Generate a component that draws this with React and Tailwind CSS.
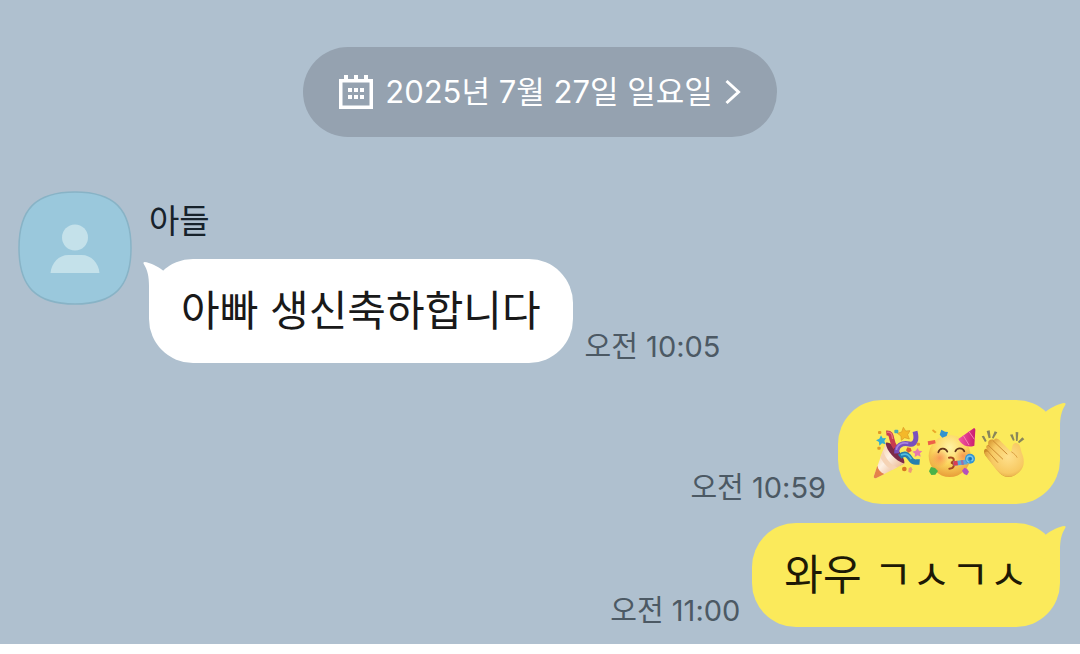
import clsx from 'clsx'

const MESSAGES = [
  { id: 1, time: '오전 10:59', emojis: ['popper', 'party', 'clap'] },
  { id: 2, time: '오전 11:00', text: '와우 ㄱㅅㄱㅅ' },
]

function CalendarIcon() {
  return (
    <svg width="34" height="34" viewBox="0 0 34 34" fill="currentColor" aria-hidden="true">
      <path fillRule="evenodd" d="M0 4h5V0h4v4h6V0h4v4h6V0h4v4h5v30H0zM3.500 7.500v23h27v-23z" />
      {[9, 15, 21].map((x) => (
        <g key={x}>
          <rect x={x} y="13" width="4" height="4" />
          <rect x={x} y="20" width="4" height="4" />
        </g>
      ))}
    </svg>
  )
}

function ChevronIcon() {
  return (
    <svg width="16" height="26" viewBox="0 0 16 26" fill="none" stroke="currentColor" strokeWidth="3" aria-hidden="true">
      <path d="M1.500 2 13.500 13 1.500 24" />
    </svg>
  )
}

function Avatar() {
  return (
    <svg className="shrink-0" width="114" height="114" viewBox="0 0 114 114" role="img" aria-label="아들">
      <path
        d="M57 1C96 1 113 18 113 57s-17 56-56 56S1 96 1 57 18 1 57 1z"
        fill="#9ac8dc"
        stroke="#88b3c6"
        strokeWidth="1.500"
      />
      <circle cx="57" cy="46.500" r="13" fill="#c4e1ea" />
      <path d="M32.500 82c1-10 8-18 18-18h13c10 0 17 8 18 18z" fill="#c4e1ea" />
    </svg>
  )
}

function Popper() {
  return (
    <svg className="overflow-visible" width="52" height="56" viewBox="15 12 156 168" role="img" aria-label="🎉">
      <defs>
        <linearGradient id="cone" x1="0" y1="0" x2="1" y2="1">
          <stop offset="0" stopColor="#f3bd8c" />
          <stop offset=".45" stopColor="#fdf0e2" />
          <stop offset="1" stopColor="#e29a68" />
        </linearGradient>
      </defs>
      <path d="M63 68c14-6 58 38 55 62l-16 8-44-52z" fill="#7d2a48" />
      <path d="M62 69c2 24 30 54 56 62L34 174c-6 2-9-1-7-7z" fill="url(#cone)" />
      <path d="M54 92c7 23 24 43 43 50l-15 8c-16-8-31-25-36-39z" fill="#f5d3b5" />
      <path d="M37 137c2 11 10 21 21 25l-24 12c-6 2-9-1-7-7z" fill="#e4824b" />
      <path d="M64 39c22-2 10 22 27 43" fill="none" stroke="#c83b50" strokeWidth="15" />
      <path d="M66 37c15-2 15 8 17 20" fill="none" stroke="#e9737a" strokeWidth="4" />
      <path d="M150 34c7 25 0 42-17 38-22-5-39 5-38 28" fill="none" stroke="#7950bd" strokeWidth="15" />
      <path d="M130 70c-17-4-34 2-36 20" fill="none" stroke="#a982df" strokeWidth="5" />
      <path d="M104 110c20-17 29 1 34 9 7 11 14 6 26 7" fill="none" stroke="#267fae" strokeWidth="16" />
      <path d="M108 105c20-8 25 3 31 12" fill="none" stroke="#54bfdf" strokeWidth="5" />
      <path d="m115 22 7 11 13-1-7 12 5 13-14-4-10 8-1-13-11-8 13-4z" fill="#f4b829" stroke="#d99526" strokeWidth="2" />
      <path d="m48 46 5 9 10-1-5 9 4 10-11-3-8 7-1-11-9-5 10-5z" fill="#36afd0" />
      <path d="m158 84 4 8 10 1-7 7 2 10-9-4-9 5 1-10-8-6 10-3z" fill="#e779ac" />
      <g fill="#e29a25">
        <rect x="39" y="33" width="10" height="9" rx="3" />
        <rect x="37" y="80" width="10" height="9" rx="3" />
        <circle cx="118" cy="147" r="7" fill="#d87821" />
        <rect x="155" y="68" width="10" height="9" rx="3" />
      </g>
      <rect x="88" y="29" width="12" height="11" rx="3" fill="#48adb3" />
      <path d="m127 82 10 2 3 9-10 5-7-7z" fill="#df5a36" />
      <path d="m138 140 4 8-4 11-8-3 1-11z" fill="#ee9b76" />
    </svg>
  )
}

function PartyFace() {
  return (
    <svg className="overflow-visible" width="52" height="56" viewBox="12 12 156 168" role="img" aria-label="🥳">
      <defs>
        <radialGradient id="face" cx=".5" cy=".3" r=".7">
          <stop offset="0" stopColor="#fff3a5" />
          <stop offset=".55" stopColor="#fcd65f" />
          <stop offset="1" stopColor="#e89e39" />
        </radialGradient>
        <radialGradient id="blush">
          <stop offset="0" stopColor="#f4774b" stopOpacity=".65" />
          <stop offset="1" stopColor="#f4774b" stopOpacity="0" />
        </radialGradient>
        <linearGradient id="hat">
          <stop offset="0" stopColor="#f45aa3" />
          <stop offset="1" stopColor="#c91c70" />
        </linearGradient>
      </defs>
      <circle cx="92" cy="108" r="63" fill="url(#face)" />
      <circle cx="62" cy="114" r="27" fill="url(#blush)" />
      <circle cx="132" cy="108" r="25" fill="url(#blush)" />
      <path d="M58 97c4-14 21-15 27-2M109 94c5-12 22-12 27 0" fill="none" stroke="#65351b" strokeWidth="5" strokeLinecap="round" />
      <path d="M90 113c18-3 18 13 6 15 13 2 11 18-5 18" fill="none" stroke="#a64a1e" strokeWidth="6" strokeLinecap="round" />
      <path d="m103 124 35-5 9 14-43 4z" fill="#5ca9da" />
      <path d="m103 124 12-2 2 14-13 1z" fill="#dc3d53" />
      <path d="m125 121 7-1 3 14-7 1z" fill="#9b70a5" />
      <circle cx="153" cy="116" r="15" fill="#3295d3" />
      <path d="M151 127c-12-5-9-19 2-19 9 0 12 12 4 15" fill="none" stroke="#7bc7ea" strokeWidth="4" />
      <circle cx="154" cy="116" r="4" fill="#1d6fac" />
      <path d="M118 57 162 26c4-3 7-1 7 4l-3 47c-21 7-37-1-48-20z" fill="url(#hat)" />
      <path d="m133 47 17 28M150 35l16 23" stroke="#f87fb3" strokeWidth="3" />
      <path d="m67 29 11 6 9 1-4 12-13 5-8-9z" fill="#3293cf" />
      <path d="m26 64 22-4 2 10-22 6z" fill="#ed6048" />
      <path d="m42 28 11 8-5 4-9-8z" fill="#e9a628" />
      <path d="m36 141 12 3 9 9-8 11-12 1-7-11z" fill="#4ab248" />
      <path d="m136 143 8 3 6 9-6 11-9-4-6-10z" fill="#b451bc" />
    </svg>
  )
}

function Clap() {
  return (
    <svg className="overflow-visible" width="52" height="56" viewBox="15 12 156 168" role="img" aria-label="👏">
      <defs>
        <radialGradient id="palm" cx=".6" cy=".48" r=".65">
          <stop offset="0" stopColor="#ffe08c" />
          <stop offset=".65" stopColor="#f7c962" />
          <stop offset="1" stopColor="#d79732" />
        </radialGradient>
      </defs>
      <path d="M44 86c-8 4-6 13 2 23l40 50c18 20 43 12 53-1l-40-52z" fill="#cb8b2b" />
      <path
        d="M68 60c5-7 12-6 18 1l35 35c3-17 3-29 15-27 13 2 12 19 18 34 12 31-2 54-25 64-22 9-38 0-53-18L44 108c-8-10 2-17 9-12-10-12-9-20-1-22-3-12 6-18 16-14z"
        fill="url(#palm)"
      />
      <path d="m66 62 42 40M52 76l43 41M50 93l30 34" fill="none" stroke="#cd8d33" strokeWidth="3" strokeLinecap="round" />
      <path d="M122 96c8 5 13 10 16 16" fill="none" stroke="#daa143" strokeWidth="3" strokeLinecap="round" />
      <g fill="#88865a">
        <path d="m32 49 7-2 8 16-5 3zM47 33l9-2 3 22-6 2zM71 34l8 3-12 19-4-3zM117 44l8-1 6 18-5 1zM134 36l8 1-2 25-5 1zM154 52l6 6-16 12-3-5z" />
      </g>
    </svg>
  )
}

const EMOJIS = { popper: Popper, party: PartyFace, clap: Clap }

function Bubble({ mine, children }) {
  return (
    <div
      className={clsx(
        'relative rounded-[44px] px-8 py-6 text-[42px] leading-14',
        mine ? 'bg-[#fbea5b] text-[#1d1905]' : 'bg-white text-[#191919]'
      )}
    >
      {/* Tail */}
      <svg
        className={clsx('absolute top-0', mine ? '-right-1.5 text-[#fbea5b]' : '-left-1.5 -scale-x-100 text-white')}
        width="32"
        height="44"
        viewBox="0 0 32 44"
        fill="currentColor"
        aria-hidden="true"
      >
        <path d="M12 11.500C18 7 25 3.500 30.500 3q1.500 0 1 1.500C27.500 11 26 17 26 27v17L0 30z" />
      </svg>
      <div className="relative">{children}</div>
    </div>
  )
}

function Time({ children }) {
  return <time className="text-[29px] leading-8 text-[#4c5964]">{children}</time>
}

export default function App() {
  return (
    <main className="bg-[#afc0cf] pt-[47px] pb-[17px] font-['Inter','Noto_Sans_CJK_KR',sans-serif]">
      {/* Date */}
      <button
        type="button"
        className="mx-auto flex h-[90px] items-center rounded-full bg-[#95a2b0] px-9 text-[31px] leading-10 text-white"
      >
        <CalendarIcon />
        <span className="mx-3">2025년 7월 27일 일요일</span>
        <ChevronIcon />
      </button>

      {/* Received */}
      <section className="mt-[54px] flex items-start gap-[17px] pl-[18px]">
        <Avatar />
        <div>
          <h2 className="mb-2 text-[33px] leading-15 text-[#17222b]">아들</h2>
          <div className="flex items-end gap-3">
            <Bubble>아빠 생신축하합니다</Bubble>
            <Time>오전 10:05</Time>
          </div>
        </div>
      </section>

      {/* Sent */}
      <section className="mt-[37px] flex flex-col gap-[19px] pr-5">
        {MESSAGES.map(({ id, time, text, emojis }) => (
          <div key={id} className="flex items-end justify-end gap-3">
            <Time>{time}</Time>
            <Bubble mine>
              {text}
              {emojis && (
                <span className="flex gap-px">
                  {emojis.map((name) => {
                    const Emoji = EMOJIS[name]
                    return <Emoji key={name} />
                  })}
                </span>
              )}
            </Bubble>
          </div>
        ))}
      </section>
    </main>
  )
}
